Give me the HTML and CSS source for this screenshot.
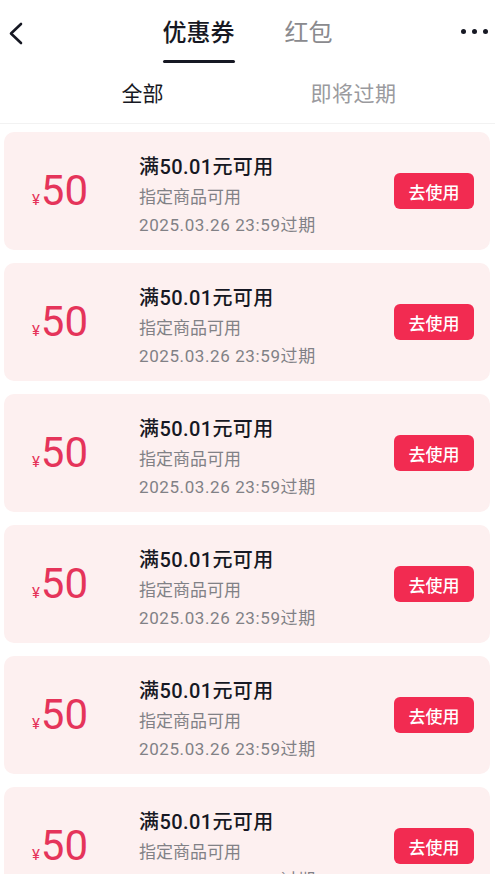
FILE: index.html
```html
<!DOCTYPE html>
<html lang="zh-CN">
<head>
    <meta charset="UTF-8">
    <meta name="viewport" content="width=device-width, initial-scale=1.0">
    <title>优惠券</title>
    <link rel="stylesheet" href="styles.css">
</head>
<body>
    <header class="top-bar">
        <a class="back-btn" href="#">
            <svg width="18" height="24" viewBox="0 0 18 24">
                <polyline points="15,3 5,12.5 15,22" fill="none" stroke="#161823" stroke-width="2.6" stroke-linecap="round" stroke-linejoin="round"/>
            </svg>
        </a>
        <nav class="main-tabs">
            <a href="#" class="main-tab active">优惠券</a>
            <a href="#" class="main-tab">红包</a>
        </nav>
        <a class="more-btn" href="#">
            <span></span><span></span><span></span>
        </a>
    </header>

    <div class="sub-tabs">
        <a href="#" class="sub-tab active">全部</a>
        <a href="#" class="sub-tab">即将过期</a>
    </div>

    <div class="coupon-list" id="coupon-list">
        <div class="coupon-card">
            <div class="coupon-amount"><span class="yen">¥</span>50</div>
            <div class="coupon-info">
                <p class="coupon-title">满50.01元可用</p>
                <p class="coupon-desc">指定商品可用</p>
                <p class="coupon-desc expire">2025.03.26 23:59过期</p>
            </div>
            <button class="use-btn">去使用</button>
        </div>
        <div class="coupon-card">
            <div class="coupon-amount"><span class="yen">¥</span>50</div>
            <div class="coupon-info">
                <p class="coupon-title">满50.01元可用</p>
                <p class="coupon-desc">指定商品可用</p>
                <p class="coupon-desc expire">2025.03.26 23:59过期</p>
            </div>
            <button class="use-btn">去使用</button>
        </div>
        <div class="coupon-card">
            <div class="coupon-amount"><span class="yen">¥</span>50</div>
            <div class="coupon-info">
                <p class="coupon-title">满50.01元可用</p>
                <p class="coupon-desc">指定商品可用</p>
                <p class="coupon-desc expire">2025.03.26 23:59过期</p>
            </div>
            <button class="use-btn">去使用</button>
        </div>
        <div class="coupon-card">
            <div class="coupon-amount"><span class="yen">¥</span>50</div>
            <div class="coupon-info">
                <p class="coupon-title">满50.01元可用</p>
                <p class="coupon-desc">指定商品可用</p>
                <p class="coupon-desc expire">2025.03.26 23:59过期</p>
            </div>
            <button class="use-btn">去使用</button>
        </div>
        <div class="coupon-card">
            <div class="coupon-amount"><span class="yen">¥</span>50</div>
            <div class="coupon-info">
                <p class="coupon-title">满50.01元可用</p>
                <p class="coupon-desc">指定商品可用</p>
                <p class="coupon-desc expire">2025.03.26 23:59过期</p>
            </div>
            <button class="use-btn">去使用</button>
        </div>
        <div class="coupon-card">
            <div class="coupon-amount"><span class="yen">¥</span>50</div>
            <div class="coupon-info">
                <p class="coupon-title">满50.01元可用</p>
                <p class="coupon-desc">指定商品可用</p>
                <p class="coupon-desc expire">2025.03.26 23:59过期</p>
            </div>
            <button class="use-btn">去使用</button>
        </div>
    </div>
</body>
</html>
```

FILE: styles.css
```css
body {
    font-family: Roboto, "Noto Sans CJK SC", sans-serif;
    margin: 0;
    padding: 0;
    background-color: #fff;
    color: #161823;
    overflow: hidden;
}

a {
    text-decoration: none;
    color: inherit;
}

/* top bar */
.top-bar {
    display: grid;
    grid-template-columns: 1fr auto 1fr;
    align-items: start;
    height: 66px;
}

.back-btn {
    display: flex;
    padding: 21px 0 0 6px;
}

.main-tabs {
    display: flex;
    gap: 50px;
}

.main-tab {
    display: flex;
    flex-direction: column;
    align-items: center;
    padding-top: 16px;
    font-size: 24px;
    line-height: 34px;
    color: #8a8a8e;
}

.main-tab.active {
    color: #161823;
    font-weight: 500;
}

.main-tab::after {
    content: "";
    width: 100%;
    height: 3px;
    margin-top: 10px;
    border-radius: 2px;
    background-color: transparent;
}

.main-tab.active::after {
    background-color: #161823;
}

.more-btn {
    justify-self: end;
    display: flex;
    gap: 6px;
    padding: 29px 7px 0 0;
}

.more-btn span {
    width: 5px;
    height: 5px;
    border-radius: 50%;
    background-color: #161823;
}

/* sub tabs */
.sub-tabs {
    display: grid;
    grid-template-columns: 1fr 1fr;
    padding: 0 36px 0 37px;
    height: 57px;
    border-bottom: 1px solid #f2f2f2;
}

.sub-tab {
    text-align: center;
    font-size: 21px;
    line-height: 57px;
    color: #9a9a9e;
}

.sub-tab:last-child {
    letter-spacing: 0.5px;
}

.sub-tab.active {
    color: #161823;
}

/* coupons */
.coupon-list {
    padding: 8px 5px 0 4px;
}

.coupon-card {
    display: flex;
    align-items: center;
    height: 118px;
    margin-bottom: 13px;
    border-radius: 10px;
    background-color: #fdf0f0;
}

.coupon-amount {
    width: 112px;
    text-align: center;
    font-size: 42px;
    line-height: 1;
    color: #e5345a;
}

.coupon-amount .yen {
    font-size: 15px;
    margin-right: 1px;
}

.coupon-info {
    flex: 1;
    align-self: flex-start;
    margin: 20px 0 0 23px;
}

.coupon-info p {
    margin: 0;
}

.coupon-title {
    font-size: 20px;
    line-height: 30px;
    font-weight: 500;
    letter-spacing: 0.4px;
    color: #161823;
}

.coupon-desc {
    font-size: 17px;
    line-height: 30px;
    color: #818186;
}

.coupon-desc.expire {
    line-height: 27px;
    letter-spacing: 0.6px;
}

.use-btn {
    width: 80px;
    height: 36px;
    margin-right: 16px;
    padding: 0;
    border: none;
    border-radius: 6px;
    background-color: #f22b51;
    color: #fff;
    font-family: inherit;
    font-size: 17px;
    font-weight: 500;
    cursor: pointer;
}
```
